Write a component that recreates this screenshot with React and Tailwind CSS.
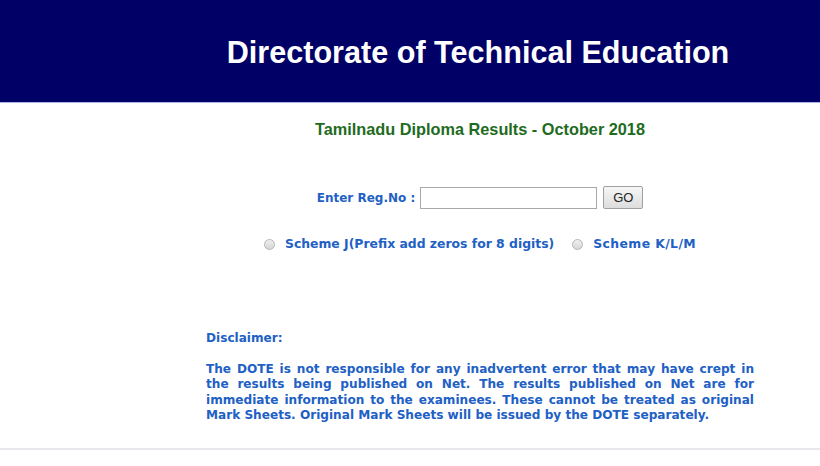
export default function App() {
  const verd = { fontFamily: '"DejaVu Sans", Verdana, sans-serif' };
  return (
    <div className="w-[820px] h-[466px] bg-white overflow-hidden relative">
      <div className="h-[103px] bg-[#000066] border-b border-[#aab6e2] flex items-center">
        <div className="ml-[204px] w-[548px] flex justify-center pt-[3px]">
          <h1
            className="text-white font-bold text-[30.6px] leading-none whitespace-nowrap"
            style={{ fontFamily: '"Liberation Sans", Arial, sans-serif' }}
          >
            Directorate of Technical Education
          </h1>
        </div>
      </div>
      <div className="ml-[206px] w-[548px] flex flex-col">
        <div
          className="mt-[16px] text-center text-[#1e6b1e] font-bold text-[16.3px] leading-[20px]"
          style={{ fontFamily: '"Liberation Sans", Arial, sans-serif' }}
        >
          Tamilnadu Diploma Results - October 2018
        </div>
        <div className="mt-[47px] flex items-center justify-center gap-[5px]" style={verd}>
          <span className="text-[#2160c4] font-bold text-[12px]">Enter Reg.No :</span>
          <input
            type="text"
            className="w-[177px] h-[22px] border border-[#a9a9a9] bg-white"
          />
          <button
            className="ml-[1px] w-[40px] h-[23px] border border-[#a0a0a0] rounded-[2px] bg-gradient-to-b from-[#f6f6f6] to-[#dddddd] text-[13px] text-[#222]"
            style={{ fontFamily: '"Liberation Sans", Arial, sans-serif' }}
          >
            GO
          </button>
        </div>
        <div className="mt-[26px] flex items-center justify-center" style={verd}>
          <span className="w-[11px] h-[11px] rounded-full border border-[#b5b5b5] bg-gradient-to-b from-[#f0f0f0] to-[#d6d6d6]"></span>
          <span className="ml-[10px] text-[#2160c4] font-bold text-[12.4px]">
            Scheme J(Prefix add zeros for 8 digits)
          </span>
          <span className="ml-[18px] w-[11px] h-[11px] rounded-full border border-[#b5b5b5] bg-gradient-to-b from-[#f0f0f0] to-[#d6d6d6]"></span>
          <span className="ml-[10px] text-[#2160c4] font-bold text-[12.4px] tracking-[0.4px]">Scheme K/L/M</span>
        </div>
        <div className="mt-[77px] text-[#2160c4] font-bold text-[12.1px] leading-[15.4px]" style={verd}>
          <div>Disclaimer:</div>
          <p className="mt-[16px] text-justify">
            The DOTE is not responsible for any inadvertent error that may have crept in the results
            being published on Net. The results published on Net are for immediate information to the
            examinees. These cannot be treated as original Mark Sheets. Original Mark Sheets will be
            issued by the DOTE separately.
          </p>
        </div>
      </div>
      <div className="absolute left-0 right-0 top-[448px] h-[2px] bg-[#e6e8ec]"></div>
    </div>
  );
}
